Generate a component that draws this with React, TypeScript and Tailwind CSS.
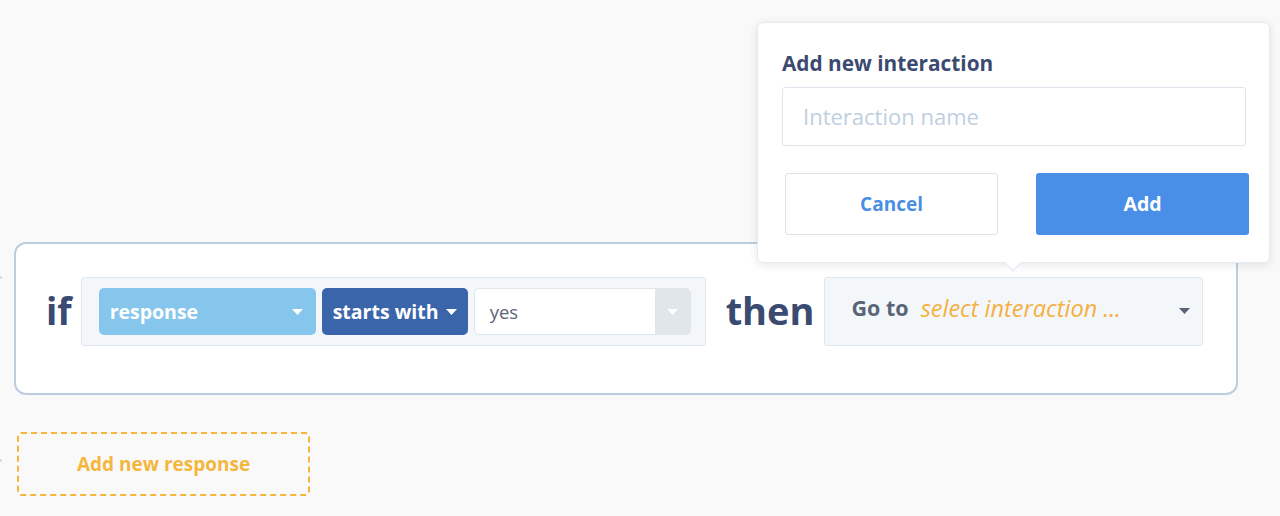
import React from "react";

const Caret = ({ color, className = "" }: { color: string; className?: string }) => (
  <svg width="11" height="6" viewBox="0 0 11 6" className={className}>
    <path d="M0 0 L11 0 L5.5 6 Z" fill={color} />
  </svg>
);

export default function App() {
  const font = { fontFamily: '"Open Sans", "Noto Sans", sans-serif' };
  return (
    <div className="relative w-[1280px] h-[516px] bg-[#f9f9f9] overflow-hidden" style={font}>
      {/* left edge marks */}
      <div className="absolute left-0 top-[276px] w-[2px] h-[3px] bg-[#d6dfeb]" />
      <div className="absolute left-0 top-[459px] w-[2px] h-[3px] bg-[#d6dfeb]" />

      <div className="flex flex-col pt-[242px] pl-[14px]">
        {/* Rule card */}
        <div className="w-[1224px] h-[153px] bg-white border-2 border-[#bccde0] rounded-[12px] flex items-start pt-[33px] pl-[30px]">
          <div className="flex items-center h-[69px]">
            <span className="text-[37px] font-bold text-[#3a4a70] leading-none mr-[9px] -mt-[3px]">if</span>
            <div className="flex items-center gap-[6px] h-[69px] bg-[#f4f7fa] border border-[#e1e7ee] rounded-[3px] pl-[17px] pr-[14px]">
              <div className="w-[217px] h-[47px] bg-[#87c6ec] rounded-[5px] flex items-center justify-between pl-[11px] pr-[13px]">
                <span className="text-white font-bold text-[19.5px]">response</span>
                <Caret color="#ffffff" />
              </div>
              <div className="w-[146px] h-[47px] bg-[#3b65ab] rounded-[5px] flex items-center pl-[11px] gap-[7px]">
                <span className="text-white font-bold text-[19.5px]">starts with</span>
                <Caret color="#ffffff" />
              </div>
              <div className="w-[217px] h-[47px] bg-white border border-[#dfe6ec] rounded-[5px] flex overflow-hidden">
                <div className="flex-1 flex items-center pl-[15px] text-[18.5px] text-[#5b6577]">yes</div>
                <div className="w-[35px] bg-[#e0e6ea] flex items-center justify-center">
                  <Caret color="#ffffff" />
                </div>
              </div>
            </div>
            <span className="text-[38px] font-bold text-[#3a4a70] leading-none ml-[20px] mr-[9px] -mt-[3px]">then</span>
            <div className="w-[379px] h-[69px] bg-[#f4f7fa] border border-[#e1e7ee] rounded-[3px] flex items-center pl-[27px] pr-[12px]">
              <span className="font-bold text-[21.5px] text-[#5a6478] -mt-[6px]">Go to</span>
              <span className="italic text-[23.5px] text-[#f5b041] ml-[12px] flex-1 -mt-[6px]">select interaction ...</span>
              <Caret color="#5a6478" className="mb-[2px]" />
            </div>
          </div>
        </div>

        {/* Add new response */}
        <div className="mt-[37px] ml-[3px] w-[293px] h-[64px] border-2 border-dashed border-[#f5b63e] rounded-[4px] flex items-center justify-center">
          <span className="text-[19px] font-bold text-[#f5b63e]">Add new response</span>
        </div>
      </div>

      {/* Popover */}
      <div className="absolute left-[757px] top-[22px] w-[513px] h-[241px] bg-white rounded-[6px] border border-[#e6ebf0] shadow-[0_2px_8px_rgba(40,60,90,0.12)] pl-[24px] pr-[23px] pt-[27px]">
        <div className="text-[20.8px] font-bold text-[#3a4a70] leading-[26px]">Add new interaction</div>
        <div className="mt-[11px] h-[59px] border border-[#dfe5ec] rounded-[3px] flex items-center pl-[20px] text-[22px] text-[#c0cfe0]">
          Interaction name
        </div>
        <div className="mt-[27px] flex justify-between pl-[3px] pr-0 -mr-[3px]">
          <div className="w-[213px] h-[62px] border border-[#dde3ea] rounded-[3px] flex items-center justify-center text-[19px] font-bold text-[#4a8fe4]">
            Cancel
          </div>
          <div className="w-[213px] h-[62px] bg-[#4a8fe7] rounded-[3px] flex items-center justify-center text-[19.5px] font-bold text-white">
            Add
          </div>
        </div>
        {/* arrow */}
        <div className="absolute left-[249px] -bottom-[7px] w-[12px] h-[12px] bg-white border-r border-b border-[#e1e7ee] rotate-45" />
      </div>
    </div>
  );
}
